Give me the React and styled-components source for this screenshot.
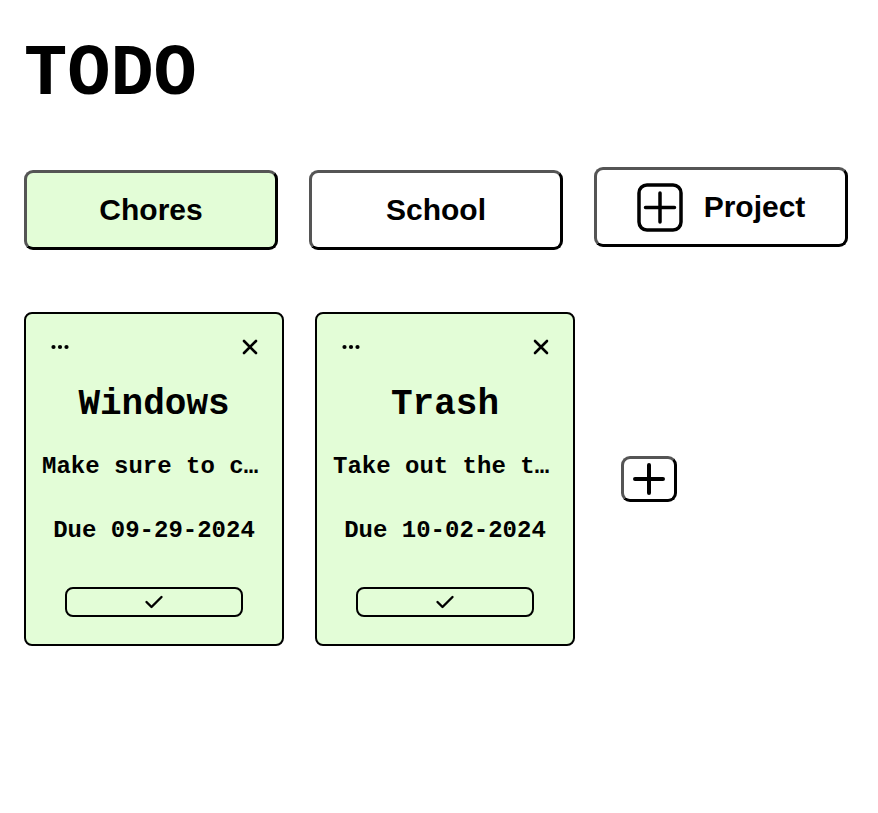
import React from "react";
import styled, { createGlobalStyle } from "styled-components";

const MONO = `"Liberation Mono", "Courier New", Courier, monospace`;

const Global = createGlobalStyle`
  html, body { margin: 0; padding: 0; background: #ffffff; }
  body { font-family: ${MONO}; color: #000; }
`;

const GREEN = "#e3fdd7";

const Page = styled.div`
  padding: 34px 24px 40px 24px;
  display: flex;
  flex-direction: column;
  align-items: flex-start;
`;

const Title = styled.h1`
  margin: 0;
  font-family: ${MONO};
  font-weight: 700;
  font-size: 72px;
  line-height: normal;
`;

const Tabs = styled.div`
  display: flex;
  gap: 31px;
  align-items: flex-start;
  margin-top: 51px;
`;

const TabButton = styled.button`
  box-sizing: border-box;
  width: 254px;
  height: 80px;
  margin-top: ${(p) => (p.$lifted ? "0" : "3px")};
  border: 3px solid;
  border-color: #555 #000 #000 #555;
  border-radius: 9px;
  background: ${(p) => (p.$active ? GREEN : "#ffffff")};
  font-family: "Liberation Sans", Arial, sans-serif;
  font-weight: 700;
  font-size: 30px;
  color: #000;
  display: flex;
  align-items: center;
  justify-content: center;
  gap: 21px;
  padding: 0;
  cursor: pointer;
`;

const Board = styled.div`
  display: flex;
  align-items: center;
  gap: 31px;
  margin-top: 62px;
`;

const Card = styled.div`
  box-sizing: border-box;
  width: 260px;
  height: 334px;
  border: 2px solid #000;
  border-radius: 8px;
  background: ${GREEN};
  padding: 16px 16px 27px 16px;
  display: flex;
  flex-direction: column;
  align-items: center;
`;

const CardTop = styled.div`
  align-self: stretch;
  height: 34px;
  display: flex;
  align-items: center;
  justify-content: space-between;
  padding: 0 4px 0 6px;
`;

const IconBtn = styled.button`
  border: none;
  background: none;
  padding: 0;
  width: 24px;
  height: 24px;
  display: flex;
  align-items: center;
  justify-content: center;
  color: #000;
  cursor: pointer;
`;

const CardTitle = styled.div`
  margin-top: 20px;
  font-weight: 700;
  font-size: 36px;
  line-height: normal;
`;

const CardDesc = styled.div`
  margin-top: 28px;
  align-self: stretch;
  font-weight: 700;
  font-size: 24px;
  line-height: normal;
  white-space: nowrap;
  overflow: hidden;
  text-overflow: ellipsis;
`;

const CardDue = styled.div`
  margin-top: 37px;
  font-weight: 700;
  font-size: 24px;
  line-height: normal;
`;

const DoneButton = styled.button`
  box-sizing: border-box;
  margin-top: auto;
  width: 178px;
  height: 30px;
  border: 2px solid #000;
  border-radius: 8px;
  background: transparent;
  display: flex;
  align-items: center;
  justify-content: center;
  padding: 0;
  cursor: pointer;
`;

const AddTodo = styled.button`
  box-sizing: border-box;
  margin-left: 15px;
  width: 56px;
  height: 46px;
  border: 3px solid;
  border-color: #555 #000 #000 #555;
  border-radius: 9px;
  background: #fff;
  display: flex;
  align-items: center;
  justify-content: center;
  padding: 0;
  cursor: pointer;
`;

const Dots = () => (
  <svg width="24" height="24" viewBox="0 0 24 24">
    <circle cx="5.5" cy="12" r="2.1" fill="#000" />
    <circle cx="12" cy="12" r="2.1" fill="#000" />
    <circle cx="18.5" cy="12" r="2.1" fill="#000" />
  </svg>
);

const XIcon = () => (
  <svg width="24" height="24" viewBox="0 0 24 24" fill="none" stroke="#000" strokeWidth="2.6" strokeLinecap="round">
    <path d="M6 6l12 12M18 6L6 18" />
  </svg>
);

const CheckIcon = () => (
  <svg width="24" height="24" viewBox="0 0 24 24" fill="none" stroke="#000" strokeWidth="2.4" strokeLinecap="round" strokeLinejoin="round">
    <path d="M4.5 12l5 5L19.5 7" />
  </svg>
);

const PlusSquare = () => (
  <svg width="46" height="49" viewBox="0 0 46 49" fill="none" stroke="#000" strokeWidth="3.5" strokeLinecap="round">
    <rect x="2" y="2" width="42" height="45" rx="8" />
    <path d="M8.5 24.5h29M23 10v29" />
  </svg>
);

const Plus = () => (
  <svg width="32" height="32" viewBox="0 0 32 32" fill="none" stroke="#000" strokeWidth="4" strokeLinecap="round">
    <path d="M2 16h28M16 2v28" />
  </svg>
);

const todos = [
  { title: "Windows", desc: "Make sure to clean all the windows", due: "09-29-2024" },
  { title: "Trash", desc: "Take out the trash", due: "10-02-2024" },
];

export default function App() {
  return (
    <>
      <Global />
      <Page>
        <Title>TODO</Title>
        <Tabs>
          <TabButton $active>Chores</TabButton>
          <TabButton>School</TabButton>
          <TabButton $lifted>
            <PlusSquare />
            <span>Project</span>
          </TabButton>
        </Tabs>
        <Board>
          {todos.map((t) => (
            <Card key={t.title}>
              <CardTop>
                <IconBtn aria-label="more"><Dots /></IconBtn>
                <IconBtn aria-label="delete"><XIcon /></IconBtn>
              </CardTop>
              <CardTitle>{t.title}</CardTitle>
              <CardDesc>{t.desc}</CardDesc>
              <CardDue>Due {t.due}</CardDue>
              <DoneButton aria-label="done"><CheckIcon /></DoneButton>
            </Card>
          ))}
          <AddTodo aria-label="add"><Plus /></AddTodo>
        </Board>
      </Page>
    </>
  );
}
